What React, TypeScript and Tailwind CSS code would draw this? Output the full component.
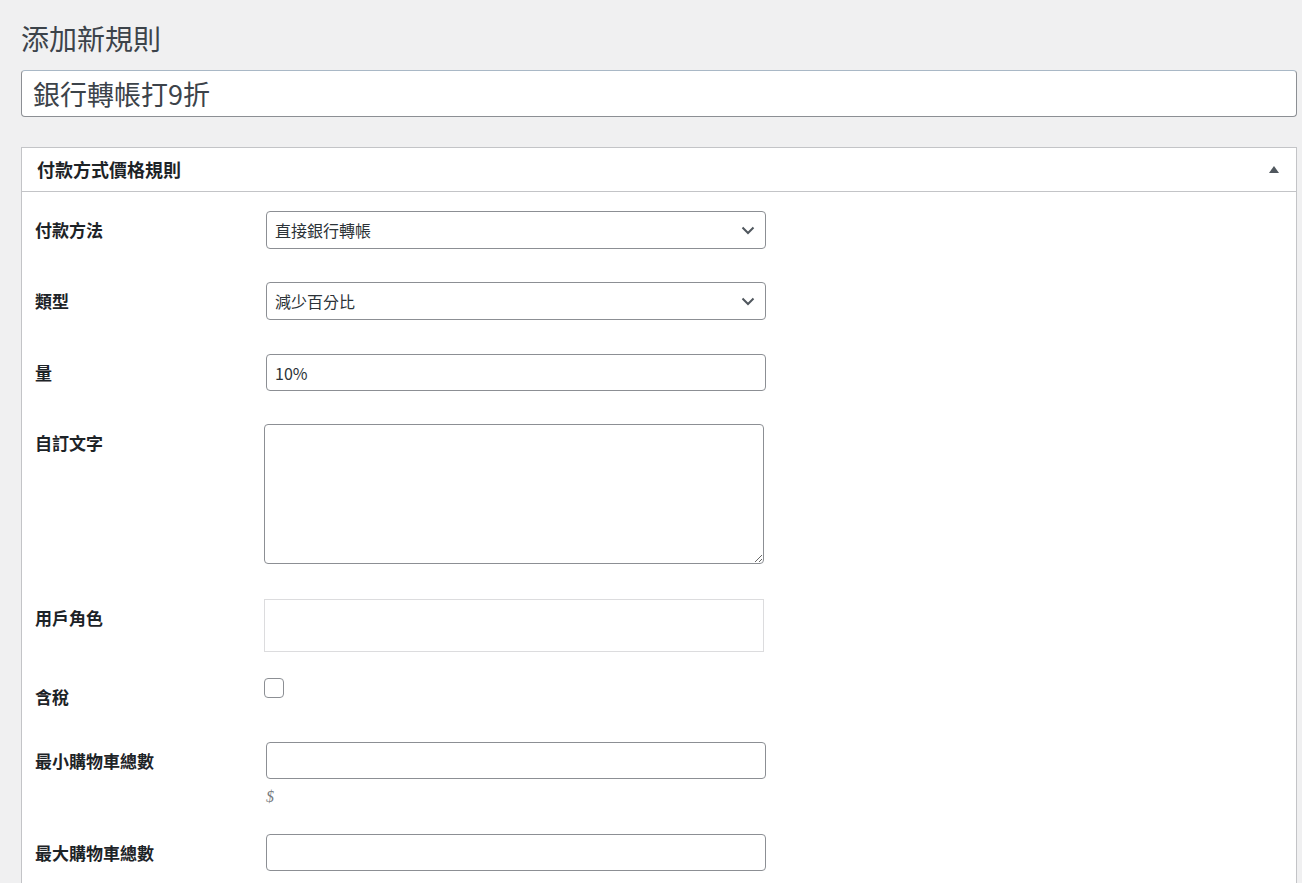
import React from 'react'

const labelFont = { fontFamily: '"Noto Sans CJK TC", "Liberation Sans", sans-serif' }

function Chevron() {
  return (
    <svg className="absolute right-[9px] top-1/2 -translate-y-1/2 w-[16px] h-[16px] text-[#50575e]" viewBox="0 0 16 16" fill="none">
      <path d="M2.5 5.5l5.5 5.5 5.5-5.5" stroke="currentColor" strokeWidth={2} />
    </svg>
  )
}

function Select({ value }: { value: string }) {
  return (
    <div className="relative ml-[2px] w-[500px] h-[38px] border border-[#8c8f94] rounded-[4px] bg-white flex items-center pl-[8px] text-[16px] text-[#2c3338]">
      <span>{value}</span>
      <Chevron />
    </div>
  )
}

function TextInput({ value = '' }: { value?: string }) {
  return (
    <input
      readOnly
      value={value}
      className="ml-[2px] w-[500px] h-[37px] border border-[#8c8f94] rounded-[4px] bg-white px-[8px] text-[16px] text-[#2c3338] outline-none"
      style={labelFont}
    />
  )
}

function Row({ label, children, className }: { label: string; children: React.ReactNode; className: string }) {
  return (
    <div className={`flex items-start ${className}`}>
      <div className="w-[229px] shrink-0 pt-[9px] text-[17px] leading-[20px] font-bold text-[#1d2327]">{label}</div>
      <div>{children}</div>
    </div>
  )
}

export default function App() {
  return (
    <div className="min-h-screen bg-[#f0f0f1] pl-[21px] pr-[5px] pt-[21px] pb-[40px]" style={labelFont}>
      <h1 className="text-[28px] leading-[34px] font-normal text-[#3c434a]">添加新規則</h1>

      <input
        readOnly
        value="銀行轉帳打9折"
        className="mt-[15px] w-full h-[47px] border border-[#8c8f94] border-t-[#a9b8c6] rounded-[4px] bg-white px-[11px] text-[27px] text-[#3c434a] outline-none"
        style={labelFont}
      />

      <div className="mt-[30px] border border-[#c3c4c7] bg-white">
        {/* Header */}
        <div className="h-[44px] border-b border-[#c3c4c7] flex items-center justify-between pl-[15px] pr-[17px]">
          <h2 className="text-[18px] font-bold text-[#1d2327]">付款方式價格規則</h2>
          <svg className="w-[10px] h-[7px] text-[#50575e]" viewBox="0 0 10 7" fill="currentColor">
            <path d="M5 0L10 7H0z" />
          </svg>
        </div>

        {/* Body */}
        <div className="pl-[13px] pt-[19px] pb-[24px]">
          <Row label="付款方法" className="mb-[33px]">
            <Select value="直接銀行轉帳" />
          </Row>
          <Row label="類型" className="mb-[34px]">
            <Select value="減少百分比" />
          </Row>
          <Row label="量" className="mb-[33px]">
            <TextInput value="10%" />
          </Row>
          <Row label="自訂文字" className="mb-[35px]">
            <textarea
              readOnly
              className="block w-[500px] h-[140px] border border-[#8c8f94] rounded-[4px] bg-white outline-none"
            />
          </Row>
          <Row label="用戶角色" className="mb-[26px]">
            <div className="w-[500px] h-[53px] border border-[#dcdcde] bg-white" />
          </Row>
          <Row label="含稅" className="mb-[35px]">
            <div className="w-[20px] h-[20px] border border-[#8c8f94] rounded-[4px] bg-white" />
          </Row>
          <Row label="最小購物車總數" className="mb-[27px]">
            <TextInput />
            <div className="ml-[2px] mt-[8px] h-[20px] leading-[20px] text-[16px] italic text-[#787c82]" style={{ fontFamily: '"Liberation Serif", serif' }}>
              $
            </div>
          </Row>
          <Row label="最大購物車總數" className="mb-[20px]">
            <TextInput />
          </Row>
        </div>
      </div>
    </div>
  )
}
